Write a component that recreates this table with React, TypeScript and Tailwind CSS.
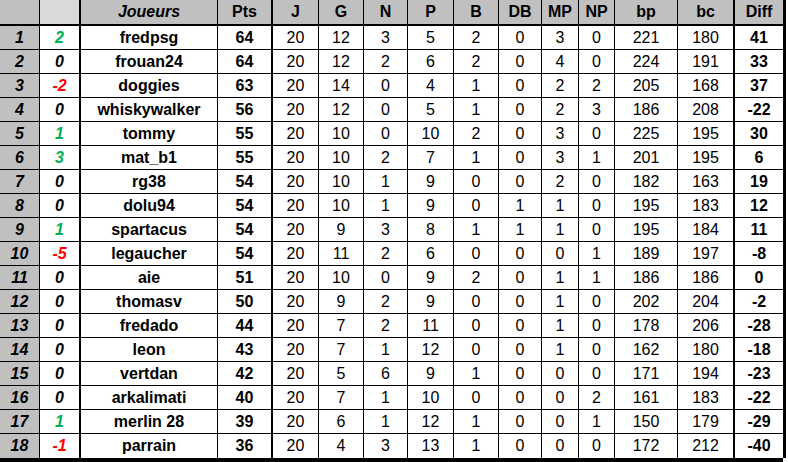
import React from "react";

type Row = [number, number, string, number, number, number, number, number, number, number, number, number, number, number, number];

const rows: Row[] = [
  [1, 2, "fredpsg", 64, 20, 12, 3, 5, 2, 0, 3, 0, 221, 180, 41],
  [2, 0, "frouan24", 64, 20, 12, 2, 6, 2, 0, 4, 0, 224, 191, 33],
  [3, -2, "doggies", 63, 20, 14, 0, 4, 1, 0, 2, 2, 205, 168, 37],
  [4, 0, "whiskywalker", 56, 20, 12, 0, 5, 1, 0, 2, 3, 186, 208, -22],
  [5, 1, "tommy", 55, 20, 10, 0, 10, 2, 0, 3, 0, 225, 195, 30],
  [6, 3, "mat_b1", 55, 20, 10, 2, 7, 1, 0, 3, 1, 201, 195, 6],
  [7, 0, "rg38", 54, 20, 10, 1, 9, 0, 0, 2, 0, 182, 163, 19],
  [8, 0, "dolu94", 54, 20, 10, 1, 9, 0, 1, 1, 0, 195, 183, 12],
  [9, 1, "spartacus", 54, 20, 9, 3, 8, 1, 1, 1, 0, 195, 184, 11],
  [10, -5, "legaucher", 54, 20, 11, 2, 6, 0, 0, 0, 1, 189, 197, -8],
  [11, 0, "aie", 51, 20, 10, 0, 9, 2, 0, 1, 1, 186, 186, 0],
  [12, 0, "thomasv", 50, 20, 9, 2, 9, 0, 0, 1, 0, 202, 204, -2],
  [13, 0, "fredado", 44, 20, 7, 2, 11, 0, 0, 1, 0, 178, 206, -28],
  [14, 0, "leon", 43, 20, 7, 1, 12, 0, 0, 1, 0, 162, 180, -18],
  [15, 0, "vertdan", 42, 20, 5, 6, 9, 1, 0, 0, 0, 171, 194, -23],
  [16, 0, "arkalimati", 40, 20, 7, 1, 10, 0, 0, 0, 2, 161, 183, -22],
  [17, 1, "merlin 28", 39, 20, 6, 1, 12, 1, 0, 0, 1, 150, 179, -29],
  [18, -1, "parrain", 36, 20, 4, 3, 13, 1, 0, 0, 0, 172, 212, -40],
];

const cell = "flex items-center justify-center border-black shrink-0";

// widths incl. right border
const W = {
  rank: "w-[40px] border-r",
  delta: "w-[41px] border-r-2",
  name: "w-[137px] border-r",
  pts: "w-[55px] border-r-2",
  j: "w-[46px] border-r",
  g: "w-[45px] border-r",
  n: "w-[44px] border-r",
  p: "w-[46px] border-r",
  b: "w-[45px] border-r",
  db: "w-[43px] border-r",
  mp: "w-[37px] border-r",
  np: "w-[36px] border-r",
  bp: "w-[63px] border-r",
  bc: "w-[57px] border-r-2",
  diff: "w-[51px] border-r-[3px]",
};

function deltaColor(d: number) {
  if (d > 0) return "text-[#00b050]";
  if (d < 0) return "text-[#ff0000]";
  return "text-black";
}

export default function App() {
  return (
    <div
      className="w-[788px] h-[462px] bg-white text-black text-[16px] leading-none overflow-hidden"
      style={{ fontFamily: '"Liberation Sans", Arial, sans-serif' }}
    >
      {/* header */}
      <div className="flex h-[26px] border-b-2 border-black w-[786px] font-bold">
        <div className={`${cell} ${W.rank} bg-[#c0c0c0]`}></div>
        <div className={`${cell} ${W.delta} bg-[#d9d9d9]`}></div>
        <div className={`${cell} ${W.name} bg-[#c0c0c0] italic`}>Joueurs</div>
        <div className={`${cell} ${W.pts} bg-[#c0c0c0]`}>Pts</div>
        <div className={`${cell} ${W.j} bg-[#c0c0c0]`}>J</div>
        <div className={`${cell} ${W.g} bg-[#c0c0c0]`}>G</div>
        <div className={`${cell} ${W.n} bg-[#c0c0c0]`}>N</div>
        <div className={`${cell} ${W.p} bg-[#c0c0c0]`}>P</div>
        <div className={`${cell} ${W.b} bg-[#c0c0c0]`}>B</div>
        <div className={`${cell} ${W.db} bg-[#c0c0c0]`}>DB</div>
        <div className={`${cell} ${W.mp} bg-[#c0c0c0]`}>MP</div>
        <div className={`${cell} ${W.np} bg-[#c0c0c0]`}>NP</div>
        <div className={`${cell} ${W.bp} bg-[#c0c0c0]`}>bp</div>
        <div className={`${cell} ${W.bc} bg-[#c0c0c0]`}>bc</div>
        <div className={`${cell} ${W.diff} bg-[#c0c0c0]`}>Diff</div>
      </div>
      {rows.map((r, i) => {
        const last = i === rows.length - 1;
        return (
          <div
            key={r[0]}
            className={`flex w-[786px] ${last ? "h-[24px]" : "h-[24px] border-b border-black"}`}
          >
            <div className={`${cell} ${W.rank} bg-[#c0c0c0] font-bold italic`}>{r[0]}</div>
            <div className={`${cell} ${W.delta} font-bold italic ${deltaColor(r[1])}`}>{r[1]}</div>
            <div className={`${cell} ${W.name} font-bold`}>{r[2]}</div>
            <div className={`${cell} ${W.pts} font-bold`}>{r[3]}</div>
            <div className={`${cell} ${W.j}`}>{r[4]}</div>
            <div className={`${cell} ${W.g}`}>{r[5]}</div>
            <div className={`${cell} ${W.n}`}>{r[6]}</div>
            <div className={`${cell} ${W.p}`}>{r[7]}</div>
            <div className={`${cell} ${W.b}`}>{r[8]}</div>
            <div className={`${cell} ${W.db}`}>{r[9]}</div>
            <div className={`${cell} ${W.mp}`}>{r[10]}</div>
            <div className={`${cell} ${W.np}`}>{r[11]}</div>
            <div className={`${cell} ${W.bp}`}>{r[12]}</div>
            <div className={`${cell} ${W.bc}`}>{r[13]}</div>
            <div className={`${cell} ${W.diff} font-bold`}>{r[14]}</div>
          </div>
        );
      })}
      <div className="h-[4px] w-[783px] bg-black"></div>
    </div>
  );
}
